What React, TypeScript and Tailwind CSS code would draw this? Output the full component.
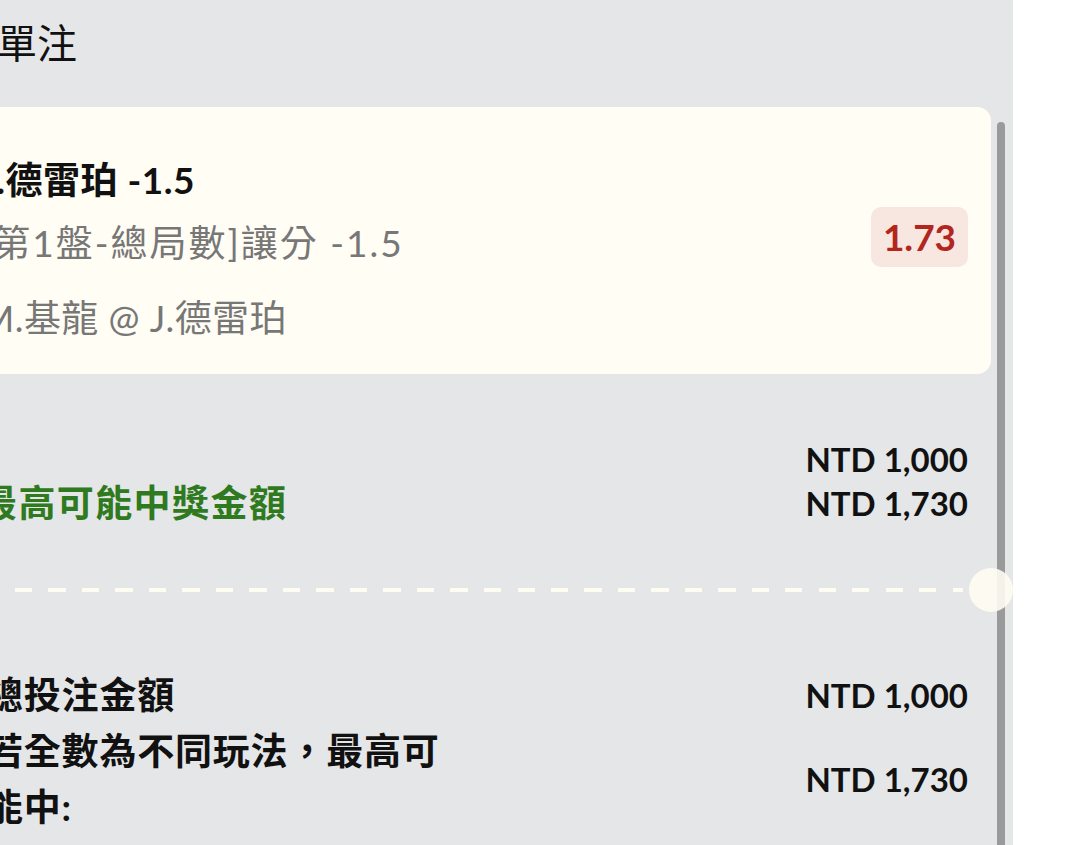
import React from 'react';

const Amount: React.FC<{ children: React.ReactNode }> = ({ children }) => (
    <span className="text-[33px] font-bold leading-[44px] text-[#111]">{children}</span>
);

const App: React.FC = () => {
    return (
        <div className="flex h-[845px] w-[1080px] overflow-hidden bg-white font-['Lato','Noto_Sans_CJK_TC',sans-serif]">
            <div className="flex w-[1013px] shrink-0 bg-[#e5e6e8]">
                {/* Main column, left part is cut off by the viewport */}
                <div className="-ml-[43px] flex min-w-0 flex-1 flex-col">
                    <div className="ml-[40px] pt-[15px] text-[40px] leading-[56px] text-[#111]">單注</div>

                    {/* Bet card */}
                    <div className="mt-[36px] flex items-start justify-between rounded-r-[14px] bg-[#fffdf4] px-[23px] pb-[31px] pt-[48px]">
                        <div className="flex flex-col whitespace-nowrap">
                            <div className="text-[37px] font-bold leading-[50px] tracking-[0.5px] text-[#111]">J.德雷珀 -1.5</div>
                            <div className="mt-[13px] text-[37px] leading-[50px] tracking-[2px] text-[#777]">[第1盤-總局數]讓分 -1.5</div>
                            <div className="mt-[25px] text-[37px] leading-[50px] tracking-[0.4px] text-[#777]">M.基龍 @ J.德雷珀</div>
                        </div>
                        <div className="mt-[52px] flex h-[60px] w-[97px] items-center justify-center rounded-[10px] bg-[#f7e7e0] text-[37px] font-bold text-[#b3261e]">
                            1.73
                        </div>
                    </div>

                    {/* Stake / payout */}
                    <div className="mt-[63px] flex flex-col px-[23px]">
                        <div className="flex justify-end">
                            <Amount>NTD 1,000</Amount>
                        </div>
                        <div className="flex items-center justify-between">
                            <span className="text-[37px] font-bold leading-[44px] tracking-[1.4px] text-[#2f7a1f]">最高可能中獎金額</span>
                            <Amount>NTD 1,730</Amount>
                        </div>
                    </div>

                    {/* Ticket tear line */}
                    <div className="mt-[43px] flex h-[44px] items-center">
                        <div className="ml-[58px] mr-[6px] h-[4px] flex-1 bg-[repeating-linear-gradient(to_right,#fffdf2_0_17px,transparent_17px_33.5px)]" />
                        <div className="relative z-10 -mr-[22px] h-[44px] w-[44px] shrink-0 rounded-full bg-[#fffdf2]/90" />
                    </div>

                    {/* Totals */}
                    <div className="mt-[55px] flex flex-col pl-[29px] pr-[23px]">
                        <div className="flex items-center justify-between">
                            <span className="text-[37px] font-bold leading-[56px] tracking-[0.8px] text-[#111]">總投注金額</span>
                            <Amount>NTD 1,000</Amount>
                        </div>
                        <div className="flex items-center justify-between">
                            <span className="w-[470px] text-[37px] font-bold leading-[56px] tracking-[0.8px] text-[#111]">若全數為不同玩法，最高可能中:</span>
                            <Amount>NTD 1,730</Amount>
                        </div>
                    </div>
                </div>

                {/* Scrollbar */}
                <div className="flex w-[22px] shrink-0 pl-[6px] pt-[122px]">
                    <div className="h-full w-[8px] rounded-t-full bg-[#9a9a9b]" />
                </div>
            </div>
        </div>
    );
};

export default App;
